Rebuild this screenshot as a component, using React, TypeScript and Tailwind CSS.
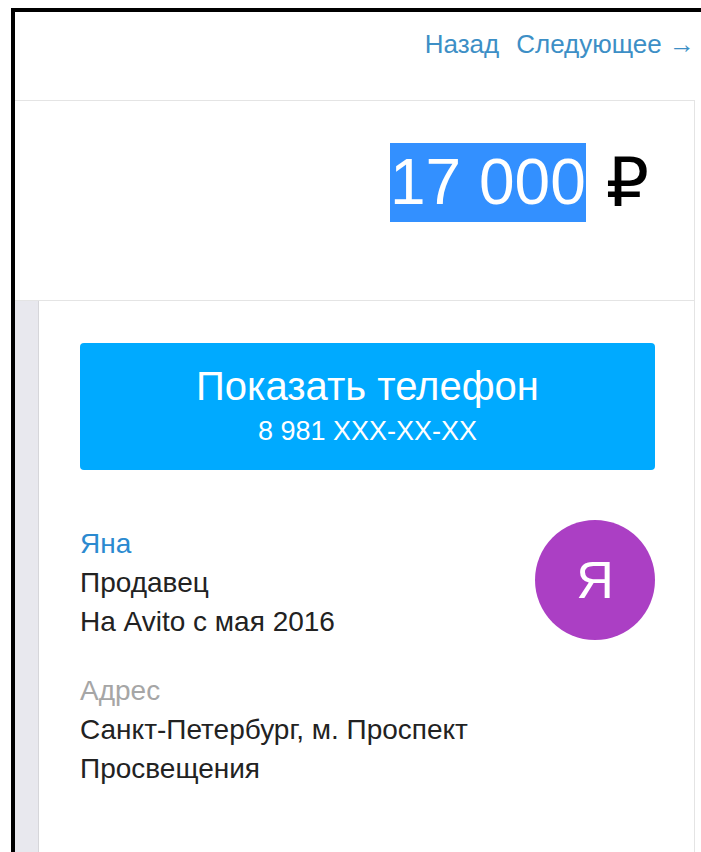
export default function App() {
  return (
    <div className="min-h-[852px] overflow-hidden bg-white pl-[11px] pt-[8px] font-[family-name:Liberation_Sans,Arial,sans-serif]">
      <div className="flex min-h-[844px] flex-col border-l-4 border-t-4 border-black">
        {/* pager links */}
        <div className="flex h-[88px] items-start justify-end gap-[17px] pr-[6px] pt-[17px] text-[26px] leading-[30px] text-[#3d8fc6]">
          <a href="#">Назад</a>
          <a href="#">Следующее →</a>
        </div>

        {/* price */}
        <div className="mr-[6px] flex h-[201px] items-start justify-end border-b border-r border-t border-[#e4e4e4] pr-[45px] pt-[42px]">
          <span className="bg-[#3390ff] text-[64px] leading-[79px] text-white">17 000</span>
          <span className="ml-[20px] font-[family-name:DejaVu_Sans,sans-serif] text-[68px] leading-[79px] text-black">₽</span>
        </div>

        <div className="flex flex-1">
          <div className="w-[24px] border-r border-[#d6d6da] bg-[#e8e8ee]" />
          <div className="mr-[6px] flex-1 border-r border-[#e4e4e4] pl-[41px] pr-[39px] pt-[42px]">
            <button className="flex h-[127px] w-full flex-col items-center rounded-[4px] bg-[#00aaff] pt-[20px] text-white">
              <span className="text-[40px] leading-[46px]">Показать телефон</span>
              <span className="mt-[6px] text-[27px] leading-[32px]">8 981 XXX-XX-XX</span>
            </button>

            <div className="mt-[50px] flex items-start justify-between">
              <div className="pt-[4px] text-[28px] leading-[39px] text-[#222]">
                <div className="text-[#2b8ad0]">Яна</div>
                <div>Продавец</div>
                <div>На Avito с мая 2016</div>
              </div>
              <div className="flex h-[120px] w-[120px] items-center justify-center rounded-full bg-[#ab3fc4] text-[52px] text-white">
                Я
              </div>
            </div>

            <div className="mt-[30px] text-[28px] leading-[39px] text-[#222]">
              <div className="text-[#a6a6a6]">Адрес</div>
              <div>Санкт-Петербург, м. Проспект</div>
              <div>Просвещения</div>
            </div>
          </div>
        </div>
      </div>
    </div>
  );
}
